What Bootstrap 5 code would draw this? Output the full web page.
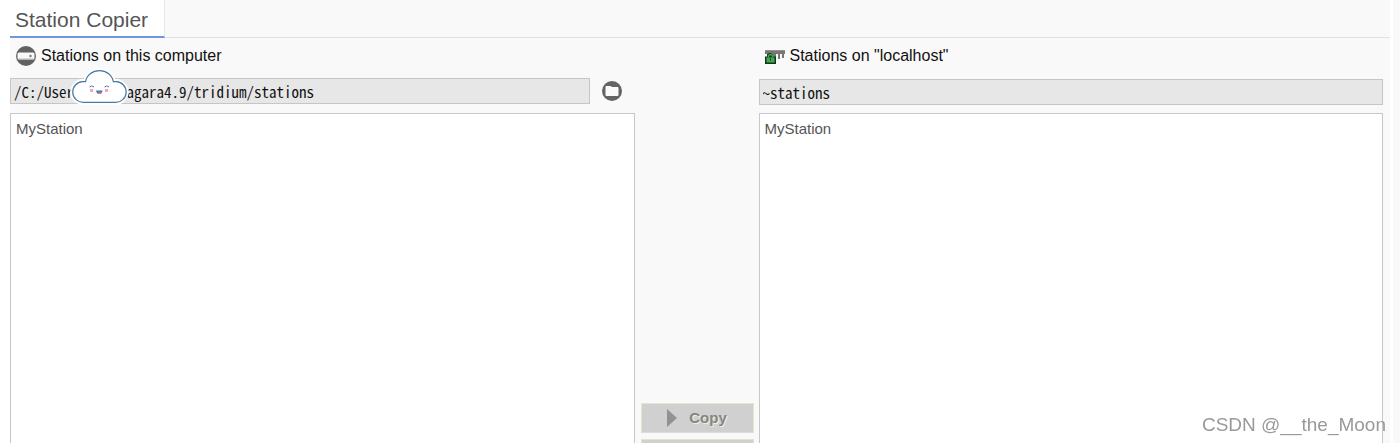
<!DOCTYPE html>
<html lang="en">
<head>
<meta charset="utf-8">
<meta name="viewport" content="width=device-width, initial-scale=1">
<title>Station Copier</title>
<link href="https://cdn.jsdelivr.net/npm/bootstrap@5.3.0/dist/css/bootstrap.min.css" rel="stylesheet">
<style>
  body { font-family: "Liberation Sans", Arial, sans-serif; font-size: 16px; color: #111; background: #fff; }
  .workspace { margin-left: 10px; border-right: 7px solid #f9f9f9; }
  .view { background: #f9f9f9; margin-right: 3px; padding-right: 7px; }
  .view-tabs { height: 38px; margin-right: -7px; border-bottom: 1px solid #e2e2e2; }
  .view-tab { width: 155px; height: 38px; padding: 5px 5px 0; font-size: 21px; line-height: 30px; color: #555; background: #fff; border-bottom: 2px solid #6d98df; border-right: 1px solid #e6e6e6; }
  .station-pane { flex: 1 1 0; min-width: 0; }
  .pane-title { height: 34px; line-height: 34px; gap: 5px; padding: 1px 0 0 6px; }
  .path-row { height: 33px; padding-top: 6px; }
  .path-row.remote { padding-top: 7px; }
  .path-box { height: 26px; min-width: 0; padding: 0 0 0 3px; background: #e7e7e7; border: 1px solid #c6c6c6; color: #111; font-family: "Noto Sans CJK SC", monospace; font-feature-settings: "hwid"; font-size: 15px; line-height: 24px; }
  .browse { width: 45px; height: 26px; }
  .station-list { margin-top: 8px; background: #fff; border: 1px solid #c8c8c8; border-bottom: 0; padding: 5px; font-size: 15px; line-height: 20px; color: #555; }
  .actions { width: 124px; padding: 0 5px 0 6px; gap: 6px; }
  .action, .action:disabled { flex: none; height: 30px; border: 1px solid #e3e3d0; border-bottom-color: #dcdcdc; border-radius: 0; background: #d0d0d0; color: #858585; opacity: 1; font-size: 15px; font-weight: bold; line-height: 28px; text-shadow: 1px 1px #f0f0df; gap: 12px; }
  .action:last-child { margin-bottom: -26px; }
  .sticker { left: 60px; top: -8px; overflow: visible; }
  .watermark { right: 14px; bottom: 4px; font-size: 19px; line-height: 28px; color: #999; }
</style>
</head>
<body class="vh-100 overflow-hidden">
<main class="workspace h-100">
  <div class="view h-100 d-flex flex-column">
    <div class="view-tabs"><div class="view-tab">Station Copier</div></div>
    <div class="d-flex flex-grow-1">
      <section class="station-pane d-flex flex-column">
        <label class="pane-title d-flex align-items-center" for="localPath">
          <svg width="20" height="20" viewBox="0 0 20 20" aria-hidden="true"><circle cx="10" cy="10" r="10" fill="#626262"/><rect x="1.500" y="6.500" width="17" height="7" rx="1.500" fill="#f8f8f8"/><path d="M2.500 13h15" stroke="#bbb"/><circle cx="14.500" cy="10" r="1.200" fill="#777"/></svg>
          Stations on this computer
        </label>
        <div class="path-row d-flex position-relative">
          <input class="path-box flex-grow-1" id="localPath" type="text" readonly value="/C:/User       agara4.9/tridium/stations">
          <button class="browse btn p-0 border-0 d-flex align-items-center justify-content-center" type="button" aria-label="Browse">
            <svg width="20" height="20" viewBox="0 0 20 20"><circle cx="10" cy="10" r="10" fill="#646464"/><path d="M3.500 6q0-1 1-1h4L10 6h5.500q1 0 1 1v7q0 1-1 1h-11q-1 0-1-1z" fill="#fafafa"/></svg>
          </button>
          <svg class="sticker position-absolute" width="57" height="44" viewBox="0 0 57 44" aria-hidden="true">
            <path d="M13.6 38.3a10.3 10.3 0 0 1-1-20.7h3a14 12.8 0 0 1 27.7 0h3a10.3 10.3 0 0 1-1 20.7z" fill="#fff" stroke="#fff" stroke-width="5"/>
            <path d="M13.6 38.3a10.3 10.3 0 0 1-1-20.7h3a14 12.8 0 0 1 27.7 0h3a10.3 10.3 0 0 1-1 20.7z" fill="#fff" stroke="#477aa5" stroke-width="1.2"/>
            <path d="M19.500 23q2.300-2.200 4.500 0M34.500 23q2.300-2.200 4.500 0" fill="none" stroke="#477aa5"/>
            <path d="M20 25h3v3h-3zM35 25h3v3h-3z" fill="#f7a3bb"/>
            <path d="M26 26.500h6.500q-.5 3.500-3.200 3.500T26 26.500z" fill="#477aa5"/><path d="M27.700 28.500h3v1.500h-3z" fill="#f06c91"/>
          </svg>
        </div>
        <div class="station-list flex-grow-1">MyStation</div>
      </section>
      <div class="actions d-flex flex-column justify-content-end overflow-hidden">
        <button class="action btn p-0 d-flex align-items-center justify-content-center" type="button" disabled><svg width="10" height="18" viewBox="0 0 10 18"><path d="M0 0l10 9-10 9z" fill="#929292"/></svg>Copy</button>
        <button class="action btn p-0" type="button" disabled></button>
      </div>
      <section class="station-pane d-flex flex-column">
        <label class="pane-title d-flex align-items-center" for="remotePath">
          <svg width="20" height="20" viewBox="1 0 20 20" aria-hidden="true"><path d="M1 4h20v4H1zM3 8h3v4H3zM9 8h3v8H9zM14 8h2v5h-2zM18 8h2v4h-2z" fill="#777"/><path d="M1 4.500h20" stroke="#929292"/><path d="M1 10.500h2V8.500q3-3 6 0v2h3V18H1z" fill="#123618"/><path d="M2.500 11.500h8v5h-8z" fill="#42a94e"/><path d="M4.500 11.500V10q2-3 4 0v1.500" fill="none" stroke="#42a94e" stroke-width="1.500"/><path d="M6 12.500h1v2H6z" fill="#173b1a"/></svg>
          Stations on "localhost"
        </label>
        <div class="path-row remote d-flex"><input class="path-box flex-grow-1" id="remotePath" type="text" readonly value="~stations"></div>
        <div class="station-list flex-grow-1">MyStation</div>
      </section>
    </div>
  </div>
</main>
<div class="watermark position-fixed">CSDN @__the_Moon</div>
</body>
</html>
